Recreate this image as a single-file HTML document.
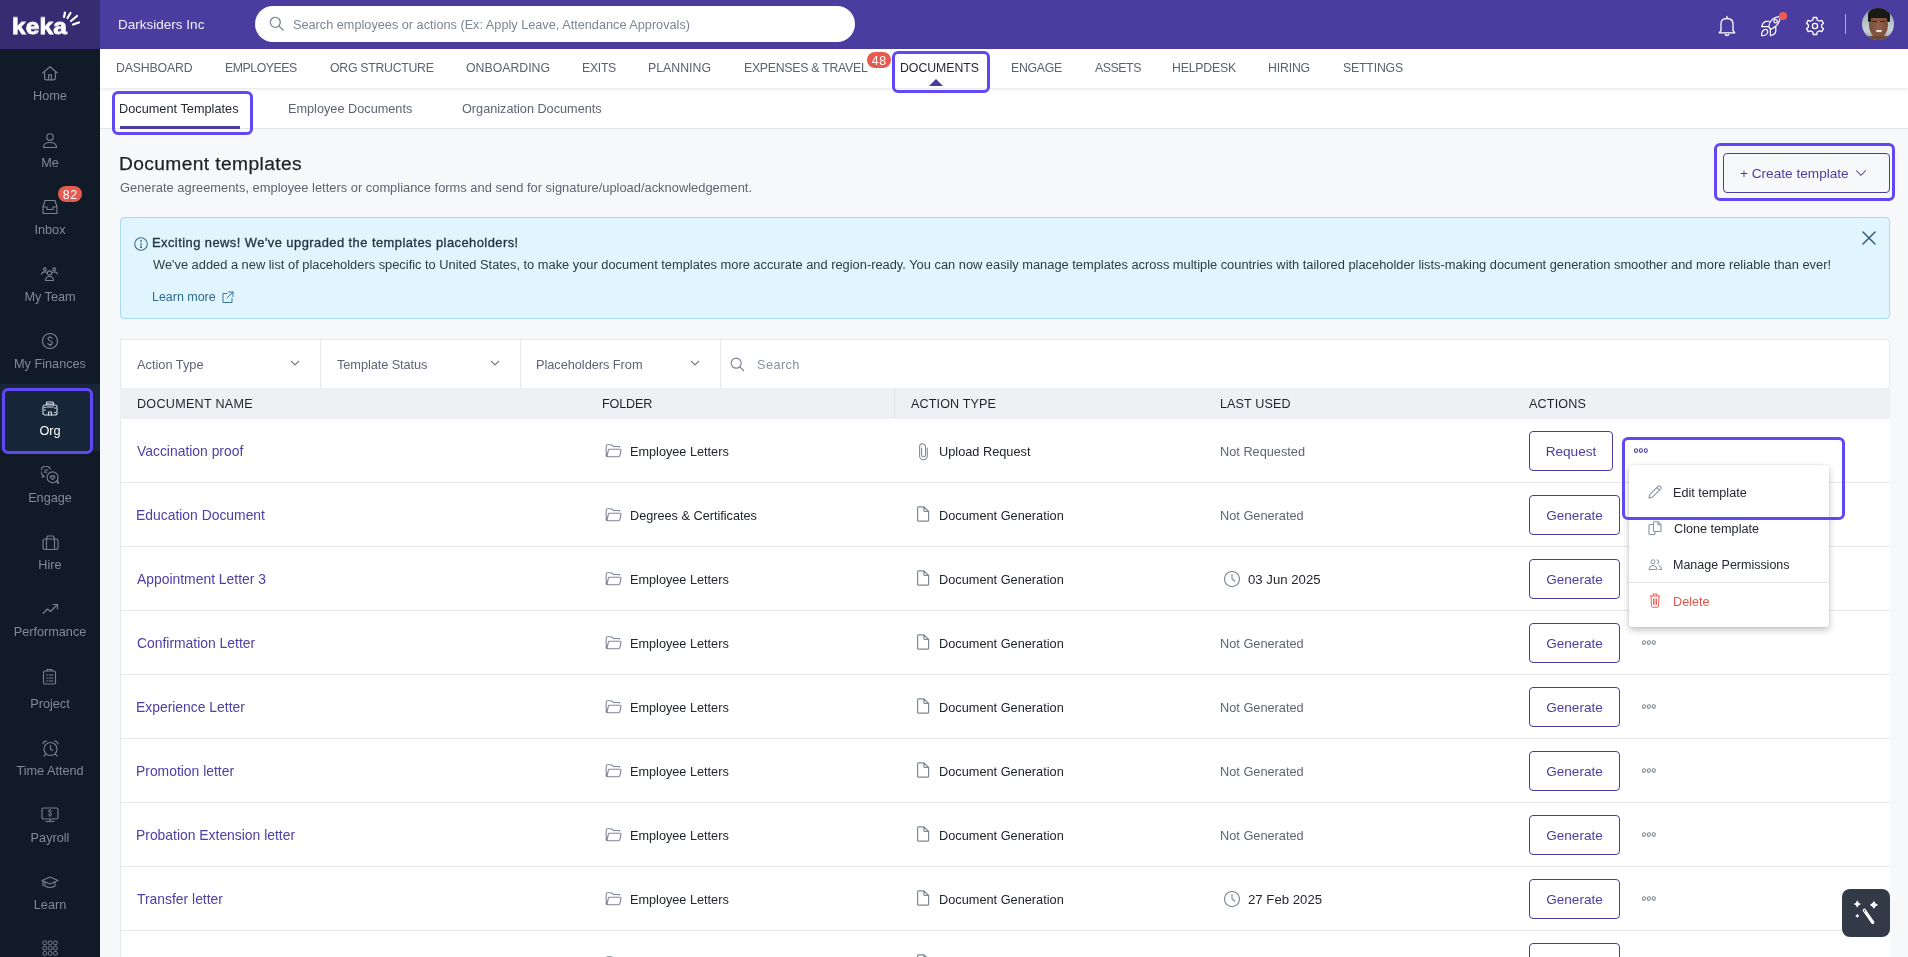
<!DOCTYPE html>
<html><head><meta charset="utf-8"><style>
html,body{margin:0;padding:0;}
body{width:1908px;height:957px;overflow:hidden;position:relative;background:#f7f8fa;font-family:"Liberation Sans", sans-serif;}
.t{position:absolute;white-space:nowrap;line-height:1;will-change:transform;}
svg{display:block}
</style></head><body>
<div style="position:absolute;left:100px;top:0px;width:1808px;height:49px;background:#4b3da0"></div>
<div style="position:absolute;left:100px;top:49px;width:1808px;height:39px;background:#fff;box-shadow:0 1px 4px rgba(30,40,60,.13);z-index:2"></div>
<div style="position:absolute;left:100px;top:88px;width:1808px;height:40px;background:#fff;border-bottom:1px solid #e3e5ea;box-sizing:border-box;height:41px"></div>
<div style="position:absolute;left:0px;top:0px;width:100px;height:957px;background:#111b27"></div>
<div style="position:absolute;left:0px;top:0px;width:100px;height:49px;background:#372c72"></div>
<div class="t" style="left:11.8px;top:14.46px;font-size:24.5px;color:#fff;font-weight:700;letter-spacing:0.1px;-webkit-text-stroke:0.9px #fff;transform:scaleY(0.92);transform-origin:0 86%;">keka</div>
<svg style="position:absolute;left:60px;top:10px;" width="22" height="18" viewBox="0 0 22 18" fill="none"><g stroke="#fff" stroke-width="2.2" stroke-linecap="round"><line x1="4" y1="7" x2="5" y2="2.5"></line><line x1="7.5" y1="8" x2="10.5" y2="3"></line><line x1="11" y1="11" x2="17" y2="6"></line><line x1="13" y1="14.5" x2="19" y2="12.5"></line></g></svg>
<div style="position:absolute;left:0px;top:384px;width:100px;height:67px;background:#172639"></div>
<div style="position:absolute;left:2px;top:388px;width:91px;height:66px;border:3px solid #6148f5;border-radius:6px;box-sizing:border-box"></div>
<svg style="position:absolute;left:42px;top:66px;" width="16" height="16" viewBox="0 0 16 16" fill="none"><g stroke="#76818f" stroke-width="1.15" stroke-linecap="round" stroke-linejoin="round"><path d="M0.8 6.8 L8 0.8 L15.2 6.8 M2.6 5.4 V11.8 Q2.6 13.8 4.6 13.8 H11.4 Q13.4 13.8 13.4 11.8 V5.4 M6.6 13.8 V8.8 H9.4 V13.8"></path></g></svg>
<div class="t" style="left:0;width:100px;text-align:center;top:90.25px;font-size:12.7px;color:#7f8a99">Home</div>
<svg style="position:absolute;left:42px;top:132px;" width="16" height="16" viewBox="0 0 16 16" fill="none"><g stroke="#76818f" stroke-width="1.15" stroke-linecap="round" stroke-linejoin="round"><circle cx="8" cy="5" r="3.3"></circle><path d="M1.5 15.5 Q1.5 10.5 8 10.5 Q14.5 10.5 14.5 15.5 Z"></path></g></svg>
<div class="t" style="left:0;width:100px;text-align:center;top:157.25px;font-size:12.7px;color:#7f8a99">Me</div>
<svg style="position:absolute;left:42px;top:199px;" width="16" height="16" viewBox="0 0 16 16" fill="none"><g stroke="#76818f" stroke-width="1.15" stroke-linecap="round" stroke-linejoin="round"><path d="M3 1.5 H13 L15 8 V14.5 H1 V8 Z M1 8 H5 V10.5 H11 V8 H15"></path></g></svg>
<div class="t" style="left:0;width:100px;text-align:center;top:224.25px;font-size:12.7px;color:#7f8a99">Inbox</div>
<svg style="position:absolute;left:41px;top:267px;" width="17" height="14" viewBox="0 0 17 14" fill="none"><g stroke="#76818f" stroke-width="1.15" stroke-linecap="round" stroke-linejoin="round"><circle cx="8.5" cy="6" r="2.2"></circle><path d="M4.5 13.5 Q4.5 9.5 8.5 9.5 Q12.5 9.5 12.5 13.5 Z"></path><circle cx="3.8" cy="2.3" r="1.4"></circle><circle cx="13.2" cy="2.3" r="1.4"></circle><path d="M0.5 7 Q1.2 4.8 3.8 4.8 Q5 4.8 5.8 5.4 M16.5 7 Q15.8 4.8 13.2 4.8 Q12 4.8 11.2 5.4"></path></g></svg>
<div class="t" style="left:0;width:100px;text-align:center;top:291.25px;font-size:12.7px;color:#7f8a99">My Team</div>
<svg style="position:absolute;left:42px;top:333px;" width="16" height="16" viewBox="0 0 16 16" fill="none"><g stroke="#76818f" stroke-width="1.15" stroke-linecap="round" stroke-linejoin="round"><circle cx="8" cy="8" r="7.5"></circle><path d="M10 5.2 Q9.5 4.2 8 4.2 Q6 4.2 6 5.8 Q6 7.3 8 7.7 Q10.2 8.2 10.2 9.9 Q10.2 11.6 8 11.6 Q6.3 11.6 5.8 10.5 M8 3 V4.2 M8 11.6 V13"></path></g></svg>
<div class="t" style="left:0;width:100px;text-align:center;top:358.25px;font-size:12.7px;color:#7f8a99">My Finances</div>
<svg style="position:absolute;left:42px;top:401px;" width="16" height="15" viewBox="0 0 16 15" fill="none"><g stroke="#d5d9df" stroke-width="1.15" stroke-linecap="round" stroke-linejoin="round"><rect x="1" y="4" width="14" height="10" rx="2"></rect><path d="M4.5 4 V2 Q4.5 1 5.5 1 H10.5 Q11.5 1 11.5 2 V4 M5.5 3 H10.5 M5 6 H11 M6.5 14 V11 H9.5 V14 M2.5 6.5 H3.5 M2.5 9 H3.5 M12.5 7 H13.5 M12.5 11.5 H13.5"></path></g></svg>
<div class="t" style="left:0;width:100px;text-align:center;top:425.25px;font-size:12.7px;color:#ffffff">Org</div>
<svg style="position:absolute;left:41px;top:466px;" width="18" height="18" viewBox="0 0 18 18" fill="none"><g stroke="#76818f" stroke-width="1.15" stroke-linecap="round" stroke-linejoin="round"><path d="M9.3 2.9 A5 5 0 1 0 2.3 9.4 L1.1 11.2 L3.6 10.3"></path><path d="M3.4 4 H6.8 M3.4 6.1 H5.8"></path><circle cx="11.6" cy="11.3" r="5.5"></circle><path d="M15.3 15.3 L17.5 17.6 L16.7 14.2"></path><path d="M11.6 13.6 L9.7 11.7 Q9 10.4 10.3 9.9 Q11.1 9.7 11.6 10.5 Q12.1 9.7 12.9 9.9 Q14.2 10.4 13.5 11.7 Z"></path></g></svg>
<div class="t" style="left:0;width:100px;text-align:center;top:492.25px;font-size:12.7px;color:#7f8a99">Engage</div>
<svg style="position:absolute;left:41.5px;top:535px;" width="17" height="15" viewBox="0 0 17 15" fill="none"><g stroke="#76818f" stroke-width="1.15" stroke-linecap="round" stroke-linejoin="round"><rect x="1" y="4" width="15" height="10.5" rx="2"></rect><path d="M5 4 V2 Q5 1 6 1 H11 Q12 1 12 2 V4 M4.5 4 V14.5 M12.5 4 V14.5"></path></g></svg>
<div class="t" style="left:0;width:100px;text-align:center;top:559.25px;font-size:12.7px;color:#7f8a99">Hire</div>
<svg style="position:absolute;left:42px;top:603px;" width="17" height="12" viewBox="0 0 17 12" fill="none"><g stroke="#76818f" stroke-width="1.15" stroke-linecap="round" stroke-linejoin="round"><path d="M1 10.5 L5.5 6 L8.5 8.5 L15.5 1.5 M11 1.5 H15.5 V6"></path></g></svg>
<div class="t" style="left:0;width:100px;text-align:center;top:626.25px;font-size:12.7px;color:#7f8a99">Performance</div>
<svg style="position:absolute;left:42px;top:668px;" width="15" height="17" viewBox="0 0 15 17" fill="none"><g stroke="#76818f" stroke-width="1.15" stroke-linecap="round" stroke-linejoin="round"><rect x="1.5" y="3" width="12" height="13" rx="1.5"></rect><path d="M5 3 V1.5 H10 V3 M4.5 7 H5.5 M7 7 H11 M4.5 10 H5.5 M7 10 H11 M4.5 13 H5.5 M7 13 H11"></path></g></svg>
<div class="t" style="left:0;width:100px;text-align:center;top:698.25px;font-size:12.7px;color:#7f8a99">Project</div>
<svg style="position:absolute;left:41.5px;top:740px;" width="17" height="17" viewBox="0 0 17 17" fill="none"><g stroke="#76818f" stroke-width="1.15" stroke-linecap="round" stroke-linejoin="round"><circle cx="8.5" cy="9" r="6.5"></circle><path d="M8.5 5.5 V9 L10.5 10.5 M1 4 Q1.5 1 4.5 1 M16 4 Q15.5 1 12.5 1 M3.5 14.5 L2 16 M13.5 14.5 L15 16"></path></g></svg>
<div class="t" style="left:0;width:100px;text-align:center;top:765.25px;font-size:12.7px;color:#7f8a99">Time Attend</div>
<svg style="position:absolute;left:41px;top:807px;" width="18" height="16" viewBox="0 0 18 16" fill="none"><g stroke="#76818f" stroke-width="1.15" stroke-linecap="round" stroke-linejoin="round"><rect x="1" y="1" width="16" height="11" rx="1.5"></rect><path d="M9 12 V14 M5 14.5 H13 M10.2 4.2 Q9.8 3.5 9 3.5 Q7.8 3.5 7.8 4.6 Q7.8 5.5 9 5.8 Q10.3 6.1 10.3 7.2 Q10.3 8.4 9 8.4 Q8 8.4 7.6 7.6 M9 2.5 V3.5 M9 8.4 V9.5"></path></g></svg>
<div class="t" style="left:0;width:100px;text-align:center;top:832.25px;font-size:12.7px;color:#7f8a99">Payroll</div>
<svg style="position:absolute;left:41px;top:876px;" width="18" height="13" viewBox="0 0 18 13" fill="none"><g stroke="#76818f" stroke-width="1.15" stroke-linecap="round" stroke-linejoin="round"><path d="M9 1 L17 4.5 L9 8 L1 4.5 Z M4 6 V10 Q9 13 14 10 V6 M2 5 V10"></path></g></svg>
<div class="t" style="left:0;width:100px;text-align:center;top:899.25px;font-size:12.7px;color:#7f8a99">Learn</div>
<div class="t" style="left:58px;top:186px;width:24px;height:16px;line-height:19.3px;border-radius:8px;background:#e55b4f;color:#fff;font-size:12.4px;letter-spacing:0.7px;text-indent:0.7px;text-align:center">82</div>
<svg style="position:absolute;left:42px;top:940px;" width="17" height="17" viewBox="0 0 17 17" fill="none"><g stroke="#76818f" stroke-width="1"><rect x="1.0" y="1.0" width="3.6" height="3.6" rx="1"></rect><rect x="1.0" y="6.3" width="3.6" height="3.6" rx="1"></rect><rect x="1.0" y="11.6" width="3.6" height="3.6" rx="1"></rect><rect x="6.3" y="1.0" width="3.6" height="3.6" rx="1"></rect><rect x="6.3" y="6.3" width="3.6" height="3.6" rx="1"></rect><rect x="6.3" y="11.6" width="3.6" height="3.6" rx="1"></rect><rect x="11.6" y="1.0" width="3.6" height="3.6" rx="1"></rect><rect x="11.6" y="6.3" width="3.6" height="3.6" rx="1"></rect><rect x="11.6" y="11.6" width="3.6" height="3.6" rx="1"></rect></g></svg>
<div class="t" style="left: 117.5px; top: 17.77px; font-size: 13.5px; color: rgb(241, 239, 250); font-weight: 400; letter-spacing: 0.008px;">Darksiders Inc</div>
<div style="position:absolute;left:255px;top:6px;width:600px;height:36px;background:#fff;border-radius:18px"></div>
<svg style="position:absolute;left:269px;top:16px;" width="15" height="15" viewBox="0 0 15 15" fill="none"><g stroke="#7b8391" stroke-width="1.3" stroke-linecap="round"><circle cx="6.3" cy="6.3" r="5"></circle><line x1="10" y1="10" x2="14" y2="14"></line></g></svg>
<div class="t" style="left: 292.5px; top: 19.25px; font-size: 12.7px; color: rgb(125, 133, 146); font-weight: 400; letter-spacing: 0.01px;">Search employees or actions (Ex: Apply Leave, Attendance Approvals)</div>
<svg style="position:absolute;left:1718px;top:15px;" width="18" height="22" viewBox="0 0 18 22" fill="none"><g stroke="#fff" stroke-width="1.3" stroke-linecap="round" stroke-linejoin="round"><path d="M3 15.5 V9 Q3 3.5 9 3.5 Q15 3.5 15 9 V15.5 L16.8 17.8 H1.2 Z M9 1.5 V3.5 M7.3 19.5 Q9 21.5 10.7 19.5"></path></g></svg>
<svg style="position:absolute;left:1760px;top:15px;" width="22" height="22" viewBox="0 0 22 22" fill="none"><g stroke="#fff" stroke-width="1.2" stroke-linejoin="round" stroke-linecap="round"><path d="M8.8 11.5 Q9.5 3 20.4 1.4 Q19.8 10.5 11 14.3 Q9.5 13.5 8.8 11.5 Z"></path><circle cx="15.6" cy="6.3" r="1.7"></circle><path d="M9 6.4 H5.4 Q2.6 7.8 1.6 11.7 H8.6"></path><path d="M15.8 12.2 V16.3 Q15.3 19.5 10.4 20.6 V14.3"></path><path d="M1.6 20.6 Q1.4 14.8 5.6 14.3 Q8.4 14.6 7.6 17.6 Q6.4 20.7 1.6 20.6 Z"></path></g></svg>
<div style="position:absolute;left:1779px;top:12px;width:8px;height:8px;border-radius:50%;background:#ee5d4f"></div>
<svg style="position:absolute;left:1805px;top:16px;" width="20" height="20" viewBox="0 0 20 20" fill="none"><g stroke="#fff" stroke-width="1.3" stroke-linejoin="round"><path d="M8.3 1.5 H11.7 L12.2 4 L14.4 5.2 L16.8 4.4 L18.5 7.3 L16.6 9 V11 L18.5 12.7 L16.8 15.6 L14.4 14.8 L12.2 16 L11.7 18.5 H8.3 L7.8 16 L5.6 14.8 L3.2 15.6 L1.5 12.7 L3.4 11 V9 L1.5 7.3 L3.2 4.4 L5.6 5.2 L7.8 4 Z"></path><circle cx="10" cy="10" r="2.6"></circle></g></svg>
<div style="position:absolute;left:1845px;top:14px;width:1px;height:20px;background:rgba(255,255,255,.55)"></div>
<div style="position:absolute;left:1862px;top:8px;width:32px;height:32px;border-radius:50%;overflow:hidden;background:linear-gradient(180deg,#8f9ea6 0,#b8c3c8 45%,#c9d2d6 70%,#8d9aa2 100%)"><div style="position:absolute;inset:0;filter:blur(0.45px)">
<div style="position:absolute;left:7px;top:4px;width:19px;height:26px;border-radius:46% 46% 50% 50%;background:radial-gradient(ellipse at 50% 55%,#93604a 0,#7e5140 55%,#6a4436 100%)"></div>
<div style="position:absolute;left:5.5px;top:0px;width:22px;height:9.5px;border-radius:11px 11px 4px 4px;background:#1c1816"></div>
<div style="position:absolute;left:5.5px;top:5px;width:3px;height:9px;border-radius:2px;background:#1c1816"></div>
<div style="position:absolute;left:24.5px;top:5px;width:3px;height:9px;border-radius:2px;background:#1c1816"></div>
<div style="position:absolute;left:10px;top:12.5px;width:5px;height:1.6px;border-radius:1px;background:#3a2620"></div>
<div style="position:absolute;left:18px;top:12.5px;width:5px;height:1.6px;border-radius:1px;background:#3a2620"></div>
<div style="position:absolute;left:13.5px;top:21.5px;width:6.5px;height:2.6px;border-radius:1px 1px 4px 4px;background:#e9e1dc"></div>
<div style="position:absolute;left:2px;top:28px;width:28px;height:6px;border-radius:8px 8px 0 0;background:#6b4a33"></div>
</div></div>
<div class="t" style="left: 115.6px; top: 61.99px; font-size: 12.3px; color: rgb(90, 98, 112); z-index: 3; letter-spacing: -0.167px;">DASHBOARD</div>
<div class="t" style="left: 225px; top: 61.99px; font-size: 12.3px; color: rgb(90, 98, 112); z-index: 3; letter-spacing: -0.462px;">EMPLOYEES</div>
<div class="t" style="left: 330px; top: 61.99px; font-size: 12.3px; color: rgb(90, 98, 112); z-index: 3; letter-spacing: -0.282px;">ORG STRUCTURE</div>
<div class="t" style="left: 466px; top: 61.99px; font-size: 12.3px; color: rgb(90, 98, 112); z-index: 3; letter-spacing: -0.005px;">ONBOARDING</div>
<div class="t" style="left: 582px; top: 61.99px; font-size: 12.3px; color: rgb(90, 98, 112); z-index: 3; letter-spacing: -0.309px;">EXITS</div>
<div class="t" style="left: 648px; top: 61.99px; font-size: 12.3px; color: rgb(90, 98, 112); z-index: 3; letter-spacing: 0.016px;">PLANNING</div>
<div class="t" style="left: 743.9px; top: 61.99px; font-size: 12.3px; color: rgb(90, 98, 112); z-index: 3; letter-spacing: -0.267px;">EXPENSES &amp; TRAVEL</div>
<div class="t" style="left: 900.2px; top: 61.99px; font-size: 12.3px; color: rgb(31, 35, 43); z-index: 3; letter-spacing: -0.028px;">DOCUMENTS</div>
<div class="t" style="left: 1011px; top: 61.99px; font-size: 12.3px; color: rgb(90, 98, 112); z-index: 3; letter-spacing: -0.271px;">ENGAGE</div>
<div class="t" style="left: 1095px; top: 61.99px; font-size: 12.3px; color: rgb(90, 98, 112); z-index: 3; letter-spacing: -0.422px;">ASSETS</div>
<div class="t" style="left: 1172px; top: 61.99px; font-size: 12.3px; color: rgb(90, 98, 112); z-index: 3; letter-spacing: -0.201px;">HELPDESK</div>
<div class="t" style="left: 1268px; top: 61.99px; font-size: 12.3px; color: rgb(90, 98, 112); z-index: 3; letter-spacing: -0.174px;">HIRING</div>
<div class="t" style="left: 1343px; top: 61.99px; font-size: 12.3px; color: rgb(90, 98, 112); z-index: 3; letter-spacing: -0.188px;">SETTINGS</div>
<div class="t" style="left:867px;top:52px;width:24px;height:16px;line-height:19.3px;border-radius:8px;background:#e55b4f;color:#fff;font-size:12.4px;letter-spacing:0.7px;text-indent:0.7px;text-align:center;z-index:3">48</div>
<div style="position:absolute;left:892px;top:51px;width:98px;height:42px;border:3px solid #6148f5;border-radius:6px;box-sizing:border-box;z-index:4"></div>
<svg style="position:absolute;left:929px;top:79px;z-index:4" width="14" height="7" viewBox="0 0 14 7" fill="none"><path d="M7 0 L14 7 H0 Z" fill="#4b3da0"></path></svg>
<div class="t" style="left: 119.4px; top: 102.95px; font-size: 12.7px; color: rgb(35, 39, 46); font-weight: 400; letter-spacing: 0.036px;">Document Templates</div>
<div style="position:absolute;left:120px;top:126px;width:120px;height:2.5px;background:#4b3da0"></div>
<div style="position:absolute;left:112px;top:91px;width:141px;height:44px;border:3px solid #6148f5;border-radius:6px;box-sizing:border-box"></div>
<div class="t" style="left: 287.7px; top: 102.95px; font-size: 12.7px; color: rgb(93, 100, 113); font-weight: 400; letter-spacing: 0.01px;">Employee Documents</div>
<div class="t" style="left:461.5px;top:102.95px;font-size:12.7px;color:#5d6471;font-weight:400;">Organization Documents</div>
<div class="t" style="left: 119.3px; top: 153.65px; font-size: 19.2px; color: rgb(29, 33, 39); font-weight: 400; -webkit-text-stroke: 0.25px rgb(29, 33, 39); letter-spacing: 0.391px;">Document templates</div>
<div class="t" style="left: 120.3px; top: 181.88px; font-size: 12.9px; color: rgb(93, 100, 113); font-weight: 400; letter-spacing: 0px;">Generate agreements, employee letters or compliance forms and send for signature/upload/acknowledgement.</div>
<div style="position:absolute;left:1723px;top:153px;width:167px;height:40px;border:1px solid #4b3da0;border-radius:4px;box-sizing:border-box;background:#f7f8fa"></div>
<div class="t" style="left: 1739.7px; top: 166.89px; font-size: 13.6px; color: rgb(75, 61, 160); font-weight: 400; letter-spacing: 0.015px;">+ Create template</div>
<svg style="position:absolute;left:1855px;top:169px;" width="12" height="8" viewBox="0 0 12 8" fill="none"><path d="M1.2 1.5 L6 6.3 L10.8 1.5" stroke="#4b3da0" stroke-width="1.05" fill="none"></path></svg>
<div style="position:absolute;left:1714px;top:143px;width:181px;height:58px;border:3px solid #6148f5;border-radius:6px;box-sizing:border-box"></div>
<div style="position:absolute;left:120px;top:217px;width:1770px;height:102px;background:#e0f5fd;border:1px solid #a9d9ec;border-radius:4px;box-sizing:border-box"></div>
<svg style="position:absolute;left:134px;top:237px;" width="14" height="14" viewBox="0 0 14 14" fill="none"><g stroke="#3c6c8b" stroke-width="1.1"><circle cx="7" cy="7" r="6.3"></circle><path d="M7 6 V10.5 M6 10.5 H8"></path></g><circle cx="7" cy="4" r="0.9" fill="#3c6c8b"></circle></svg>
<div class="t" style="left: 152.4px; top: 236.88px; font-size: 12.9px; color: rgb(31, 52, 65); font-weight: 400; -webkit-text-stroke: 0.35px rgb(31, 52, 65); letter-spacing: 0.459px;">Exciting news! We've upgraded the templates placeholders!</div>
<div class="t" style="left: 153.4px; top: 258.92px; font-size: 12.85px; color: rgb(44, 59, 70); font-weight: 400; letter-spacing: -0.001px;">We've added a new list of placeholders specific to United States, to make your document templates more accurate and region-ready. You can now easily manage templates across multiple countries with tailored placeholder lists-making document generation smoother and more reliable than ever!</div>
<div class="t" style="left: 152.4px; top: 290.72px; font-size: 12.5px; color: rgb(47, 106, 142); font-weight: 400; letter-spacing: -0.024px;">Learn more</div>
<svg style="position:absolute;left:221px;top:291px;" width="13" height="13" viewBox="0 0 13 13" fill="none"><g stroke="#2f6a8e" stroke-width="0.95" stroke-linecap="round"><path d="M6 2.5 H2 V11.5 H11 V7.5 M7.5 1 H12 V5.5 M12 1 L6 7"></path></g></svg>
<svg style="position:absolute;left:1862px;top:231px;" width="14" height="14" viewBox="0 0 14 14" fill="none"><g stroke="#2c5a73" stroke-width="1.4" stroke-linecap="round"><line x1="1" y1="1" x2="13" y2="13"></line><line x1="13" y1="1" x2="1" y2="13"></line></g></svg>
<div style="position:absolute;left:120px;top:339px;width:1770px;height:50px;background:#fff;border:1px solid #e5e7eb;border-radius:0 4px 4px 0;box-sizing:border-box"></div>
<div class="t" style="left: 137.4px; top: 359.16px; font-size: 12.8px; color: rgb(93, 101, 115); font-weight: 400; letter-spacing: -0.004px;">Action Type</div>
<svg style="position:absolute;left:290px;top:360px;" width="10" height="6" viewBox="0 0 10 6" fill="none"><path d="M1 1 L5 5 L9 1" stroke="#737b88" stroke-width="1.1" fill="none"></path></svg>
<div style="position:absolute;left:320px;top:340px;width:1px;height:48px;background:#e5e7eb"></div>
<div class="t" style="left: 337.4px; top: 359.16px; font-size: 12.8px; color: rgb(93, 101, 115); font-weight: 400; letter-spacing: -0.091px;">Template Status</div>
<svg style="position:absolute;left:490px;top:360px;" width="10" height="6" viewBox="0 0 10 6" fill="none"><path d="M1 1 L5 5 L9 1" stroke="#737b88" stroke-width="1.1" fill="none"></path></svg>
<div style="position:absolute;left:520px;top:340px;width:1px;height:48px;background:#e5e7eb"></div>
<div class="t" style="left: 536.4px; top: 359.16px; font-size: 12.8px; color: rgb(93, 101, 115); font-weight: 400; letter-spacing: -0.053px;">Placeholders From</div>
<svg style="position:absolute;left:690px;top:360px;" width="10" height="6" viewBox="0 0 10 6" fill="none"><path d="M1 1 L5 5 L9 1" stroke="#737b88" stroke-width="1.1" fill="none"></path></svg>
<div style="position:absolute;left:720px;top:340px;width:1px;height:48px;background:#e5e7eb"></div>
<svg style="position:absolute;left:730px;top:357px;" width="15" height="15" viewBox="0 0 15 15" fill="none"><g stroke="#7b8391" stroke-width="1.2" stroke-linecap="round"><circle cx="6.2" cy="6.2" r="5"></circle><line x1="9.8" y1="9.8" x2="13.5" y2="13.5"></line></g></svg>
<div class="t" style="left: 757px; top: 359.16px; font-size: 12.8px; color: rgb(138, 145, 156); font-weight: 400; letter-spacing: 0.376px;">Search</div>
<div style="position:absolute;left:120px;top:388px;width:1770px;height:569px;background:#fff;border-left:1px solid #e5e7eb;box-sizing:border-box"></div>
<div style="position:absolute;left:120px;top:388px;width:1770px;height:31px;background:#eff0f4"></div>
<div style="position:absolute;left:894px;top:388px;width:1px;height:31px;background:#e2e4e9"></div>
<div class="t" style="left: 137.4px; top: 398.13px; font-size: 12.6px; color: rgb(31, 35, 40); font-weight: 400; letter-spacing: 0.275px;">DOCUMENT NAME</div>
<div class="t" style="left: 601.9px; top: 398.13px; font-size: 12.6px; color: rgb(31, 35, 40); font-weight: 400; letter-spacing: -0.132px;">FOLDER</div>
<div class="t" style="left: 910.9px; top: 398.13px; font-size: 12.6px; color: rgb(31, 35, 40); font-weight: 400; letter-spacing: 0.123px;">ACTION TYPE</div>
<div class="t" style="left: 1220px; top: 398.13px; font-size: 12.6px; color: rgb(31, 35, 40); font-weight: 400; letter-spacing: 0.093px;">LAST USED</div>
<div class="t" style="left: 1529.3px; top: 398.13px; font-size: 12.6px; color: rgb(31, 35, 40); font-weight: 400; letter-spacing: 0.159px;">ACTIONS</div>
<div class="t" style="left:137.4px;top:445.43px;font-size:13.9px;color:#4d40a6;font-weight:400;">Vaccination proof</div>
<svg style="position:absolute;left:605px;top:444px;" width="17" height="14" viewBox="0 0 17 14" fill="none"><g stroke="#7c8696" stroke-width="1.1" stroke-linejoin="round"><path d="M1.2 12 V2.2 Q1.2 0.8 2.6 0.8 H6 Q7 0.8 7.6 1.6 L8.2 2.5 H13.6 Q14.6 2.5 15 3.5 M2 12.2 L3.4 6.2 Q3.7 5.3 4.6 5.3 H15.2 Q16.2 5.3 16 6.3 L14.8 11.7 Q14.6 12.7 13.6 12.7 H2.6 Q1.2 12.7 1.2 11.4"></path></g></svg>
<div class="t" style="left:629.5px;top:446.45px;font-size:12.7px;color:#20242b;font-weight:400;">Employee Letters</div>
<svg style="position:absolute;left:918.5px;top:442.5px;" width="10" height="18" viewBox="0 0 10 18" fill="none"><g stroke="#7c8696" stroke-width="1.05" stroke-linecap="round"><path d="M2.6 5 V11.9 A1.95 1.95 0 0 0 6.5 11.9 V3.6 A2.95 2.95 0 0 0 0.6 3.6 V12.9 A3.85 3.85 0 0 0 8.3 12.9 V5"></path></g></svg>
<div class="t" style="left:938.5px;top:446.41px;font-size:12.75px;color:#20242b;font-weight:400;">Upload Request</div>
<div class="t" style="left:1220px;top:446.41px;font-size:12.75px;color:#5f6672;font-weight:400;">Not Requested</div>
<div style="position:absolute;left:1529px;top:431px;width:84px;height:40px;border:1px solid #4b3da0;border-radius:4px;box-sizing:border-box;background:#fff"></div>
<div class="t" style="left:1529px;width:84px;text-align:center;top:444.89px;font-size:13.6px;color:#4b3da0">Request</div>
<svg style="position:absolute;left:1634.4px;top:447.5px;" width="15" height="5" viewBox="0 0 15 5" fill="none"><g stroke="#4b3da0" stroke-width="1.05"><ellipse cx="2.00" cy="2.5" rx="1.55" ry="1.85"></ellipse><ellipse cx="6.90" cy="2.5" rx="1.55" ry="1.85"></ellipse><ellipse cx="11.80" cy="2.5" rx="1.55" ry="1.85"></ellipse></g></svg>
<div style="position:absolute;left:120px;top:482px;width:1770px;height:1px;background:#e6e8ec"></div>
<div class="t" style="left:136.4px;top:509.43px;font-size:13.9px;color:#4d40a6;font-weight:400;">Education Document</div>
<svg style="position:absolute;left:605px;top:508px;" width="17" height="14" viewBox="0 0 17 14" fill="none"><g stroke="#7c8696" stroke-width="1.1" stroke-linejoin="round"><path d="M1.2 12 V2.2 Q1.2 0.8 2.6 0.8 H6 Q7 0.8 7.6 1.6 L8.2 2.5 H13.6 Q14.6 2.5 15 3.5 M2 12.2 L3.4 6.2 Q3.7 5.3 4.6 5.3 H15.2 Q16.2 5.3 16 6.3 L14.8 11.7 Q14.6 12.7 13.6 12.7 H2.6 Q1.2 12.7 1.2 11.4"></path></g></svg>
<div class="t" style="left:629.5px;top:510.45px;font-size:12.7px;color:#20242b;font-weight:400;">Degrees &amp; Certificates</div>
<svg style="position:absolute;left:915.5px;top:506px;" width="14" height="16" viewBox="0 0 14 16" fill="none"><g stroke="#7c8696" stroke-width="1.2" stroke-linejoin="round"><path d="M2.6 0.8 H8 L12.6 5.4 V14.2 Q12.6 15.2 11.6 15.2 H2.6 Q1.6 15.2 1.6 14.2 V1.8 Q1.6 0.8 2.6 0.8 Z M8 0.8 V4.4 Q8 5.4 9 5.4 H12.6"></path></g></svg>
<div class="t" style="left:938.5px;top:510.41px;font-size:12.75px;color:#20242b;font-weight:400;">Document Generation</div>
<div class="t" style="left:1220px;top:510.41px;font-size:12.75px;color:#5f6672;font-weight:400;">Not Generated</div>
<div style="position:absolute;left:1529px;top:495px;width:91px;height:40px;border:1px solid #4b3da0;border-radius:4px;box-sizing:border-box;background:#fff"></div>
<div class="t" style="left:1529px;width:91px;text-align:center;top:508.89px;font-size:13.6px;color:#4b3da0">Generate</div>
<svg style="position:absolute;left:1641.5px;top:511.5px;" width="15" height="5" viewBox="0 0 15 5" fill="none"><g stroke="#7c8696" stroke-width="1.05"><ellipse cx="2.00" cy="2.5" rx="1.55" ry="1.85"></ellipse><ellipse cx="6.90" cy="2.5" rx="1.55" ry="1.85"></ellipse><ellipse cx="11.80" cy="2.5" rx="1.55" ry="1.85"></ellipse></g></svg>
<div style="position:absolute;left:120px;top:546px;width:1770px;height:1px;background:#e6e8ec"></div>
<div class="t" style="left:137.4px;top:573.43px;font-size:13.9px;color:#4d40a6;font-weight:400;">Appointment Letter 3</div>
<svg style="position:absolute;left:605px;top:572px;" width="17" height="14" viewBox="0 0 17 14" fill="none"><g stroke="#7c8696" stroke-width="1.1" stroke-linejoin="round"><path d="M1.2 12 V2.2 Q1.2 0.8 2.6 0.8 H6 Q7 0.8 7.6 1.6 L8.2 2.5 H13.6 Q14.6 2.5 15 3.5 M2 12.2 L3.4 6.2 Q3.7 5.3 4.6 5.3 H15.2 Q16.2 5.3 16 6.3 L14.8 11.7 Q14.6 12.7 13.6 12.7 H2.6 Q1.2 12.7 1.2 11.4"></path></g></svg>
<div class="t" style="left:629.5px;top:574.45px;font-size:12.7px;color:#20242b;font-weight:400;">Employee Letters</div>
<svg style="position:absolute;left:915.5px;top:570px;" width="14" height="16" viewBox="0 0 14 16" fill="none"><g stroke="#7c8696" stroke-width="1.2" stroke-linejoin="round"><path d="M2.6 0.8 H8 L12.6 5.4 V14.2 Q12.6 15.2 11.6 15.2 H2.6 Q1.6 15.2 1.6 14.2 V1.8 Q1.6 0.8 2.6 0.8 Z M8 0.8 V4.4 Q8 5.4 9 5.4 H12.6"></path></g></svg>
<div class="t" style="left:938.5px;top:574.41px;font-size:12.75px;color:#20242b;font-weight:400;">Document Generation</div>
<svg style="position:absolute;left:1224px;top:571px;" width="16" height="16" viewBox="0 0 16 16" fill="none"><g stroke="#7c8696" stroke-width="1.1" stroke-linecap="round"><circle cx="8" cy="8" r="7.5"></circle><path d="M8 3.5 V8 L10.8 10.2"></path></g></svg>
<div class="t" style="left:1248.2px;top:573.23px;font-size:13.2px;color:#1f232b;font-weight:400;">03 Jun 2025</div>
<div style="position:absolute;left:1529px;top:559px;width:91px;height:40px;border:1px solid #4b3da0;border-radius:4px;box-sizing:border-box;background:#fff"></div>
<div class="t" style="left:1529px;width:91px;text-align:center;top:572.89px;font-size:13.6px;color:#4b3da0">Generate</div>
<svg style="position:absolute;left:1641.5px;top:575.5px;" width="15" height="5" viewBox="0 0 15 5" fill="none"><g stroke="#7c8696" stroke-width="1.05"><ellipse cx="2.00" cy="2.5" rx="1.55" ry="1.85"></ellipse><ellipse cx="6.90" cy="2.5" rx="1.55" ry="1.85"></ellipse><ellipse cx="11.80" cy="2.5" rx="1.55" ry="1.85"></ellipse></g></svg>
<div style="position:absolute;left:120px;top:610px;width:1770px;height:1px;background:#e6e8ec"></div>
<div class="t" style="left:137.4px;top:637.43px;font-size:13.9px;color:#4d40a6;font-weight:400;">Confirmation Letter</div>
<svg style="position:absolute;left:605px;top:636px;" width="17" height="14" viewBox="0 0 17 14" fill="none"><g stroke="#7c8696" stroke-width="1.1" stroke-linejoin="round"><path d="M1.2 12 V2.2 Q1.2 0.8 2.6 0.8 H6 Q7 0.8 7.6 1.6 L8.2 2.5 H13.6 Q14.6 2.5 15 3.5 M2 12.2 L3.4 6.2 Q3.7 5.3 4.6 5.3 H15.2 Q16.2 5.3 16 6.3 L14.8 11.7 Q14.6 12.7 13.6 12.7 H2.6 Q1.2 12.7 1.2 11.4"></path></g></svg>
<div class="t" style="left:629.5px;top:638.45px;font-size:12.7px;color:#20242b;font-weight:400;">Employee Letters</div>
<svg style="position:absolute;left:915.5px;top:634px;" width="14" height="16" viewBox="0 0 14 16" fill="none"><g stroke="#7c8696" stroke-width="1.2" stroke-linejoin="round"><path d="M2.6 0.8 H8 L12.6 5.4 V14.2 Q12.6 15.2 11.6 15.2 H2.6 Q1.6 15.2 1.6 14.2 V1.8 Q1.6 0.8 2.6 0.8 Z M8 0.8 V4.4 Q8 5.4 9 5.4 H12.6"></path></g></svg>
<div class="t" style="left:938.5px;top:638.41px;font-size:12.75px;color:#20242b;font-weight:400;">Document Generation</div>
<div class="t" style="left:1220px;top:638.41px;font-size:12.75px;color:#5f6672;font-weight:400;">Not Generated</div>
<div style="position:absolute;left:1529px;top:623px;width:91px;height:40px;border:1px solid #4b3da0;border-radius:4px;box-sizing:border-box;background:#fff"></div>
<div class="t" style="left:1529px;width:91px;text-align:center;top:636.89px;font-size:13.6px;color:#4b3da0">Generate</div>
<svg style="position:absolute;left:1641.5px;top:639.5px;" width="15" height="5" viewBox="0 0 15 5" fill="none"><g stroke="#7c8696" stroke-width="1.05"><ellipse cx="2.00" cy="2.5" rx="1.55" ry="1.85"></ellipse><ellipse cx="6.90" cy="2.5" rx="1.55" ry="1.85"></ellipse><ellipse cx="11.80" cy="2.5" rx="1.55" ry="1.85"></ellipse></g></svg>
<div style="position:absolute;left:120px;top:674px;width:1770px;height:1px;background:#e6e8ec"></div>
<div class="t" style="left:136.4px;top:701.43px;font-size:13.9px;color:#4d40a6;font-weight:400;">Experience Letter</div>
<svg style="position:absolute;left:605px;top:700px;" width="17" height="14" viewBox="0 0 17 14" fill="none"><g stroke="#7c8696" stroke-width="1.1" stroke-linejoin="round"><path d="M1.2 12 V2.2 Q1.2 0.8 2.6 0.8 H6 Q7 0.8 7.6 1.6 L8.2 2.5 H13.6 Q14.6 2.5 15 3.5 M2 12.2 L3.4 6.2 Q3.7 5.3 4.6 5.3 H15.2 Q16.2 5.3 16 6.3 L14.8 11.7 Q14.6 12.7 13.6 12.7 H2.6 Q1.2 12.7 1.2 11.4"></path></g></svg>
<div class="t" style="left:629.5px;top:702.45px;font-size:12.7px;color:#20242b;font-weight:400;">Employee Letters</div>
<svg style="position:absolute;left:915.5px;top:698px;" width="14" height="16" viewBox="0 0 14 16" fill="none"><g stroke="#7c8696" stroke-width="1.2" stroke-linejoin="round"><path d="M2.6 0.8 H8 L12.6 5.4 V14.2 Q12.6 15.2 11.6 15.2 H2.6 Q1.6 15.2 1.6 14.2 V1.8 Q1.6 0.8 2.6 0.8 Z M8 0.8 V4.4 Q8 5.4 9 5.4 H12.6"></path></g></svg>
<div class="t" style="left:938.5px;top:702.41px;font-size:12.75px;color:#20242b;font-weight:400;">Document Generation</div>
<div class="t" style="left:1220px;top:702.41px;font-size:12.75px;color:#5f6672;font-weight:400;">Not Generated</div>
<div style="position:absolute;left:1529px;top:687px;width:91px;height:40px;border:1px solid #4b3da0;border-radius:4px;box-sizing:border-box;background:#fff"></div>
<div class="t" style="left:1529px;width:91px;text-align:center;top:700.89px;font-size:13.6px;color:#4b3da0">Generate</div>
<svg style="position:absolute;left:1641.5px;top:703.5px;" width="15" height="5" viewBox="0 0 15 5" fill="none"><g stroke="#7c8696" stroke-width="1.05"><ellipse cx="2.00" cy="2.5" rx="1.55" ry="1.85"></ellipse><ellipse cx="6.90" cy="2.5" rx="1.55" ry="1.85"></ellipse><ellipse cx="11.80" cy="2.5" rx="1.55" ry="1.85"></ellipse></g></svg>
<div style="position:absolute;left:120px;top:738px;width:1770px;height:1px;background:#e6e8ec"></div>
<div class="t" style="left:136.4px;top:765.43px;font-size:13.9px;color:#4d40a6;font-weight:400;">Promotion letter</div>
<svg style="position:absolute;left:605px;top:764px;" width="17" height="14" viewBox="0 0 17 14" fill="none"><g stroke="#7c8696" stroke-width="1.1" stroke-linejoin="round"><path d="M1.2 12 V2.2 Q1.2 0.8 2.6 0.8 H6 Q7 0.8 7.6 1.6 L8.2 2.5 H13.6 Q14.6 2.5 15 3.5 M2 12.2 L3.4 6.2 Q3.7 5.3 4.6 5.3 H15.2 Q16.2 5.3 16 6.3 L14.8 11.7 Q14.6 12.7 13.6 12.7 H2.6 Q1.2 12.7 1.2 11.4"></path></g></svg>
<div class="t" style="left:629.5px;top:766.45px;font-size:12.7px;color:#20242b;font-weight:400;">Employee Letters</div>
<svg style="position:absolute;left:915.5px;top:762px;" width="14" height="16" viewBox="0 0 14 16" fill="none"><g stroke="#7c8696" stroke-width="1.2" stroke-linejoin="round"><path d="M2.6 0.8 H8 L12.6 5.4 V14.2 Q12.6 15.2 11.6 15.2 H2.6 Q1.6 15.2 1.6 14.2 V1.8 Q1.6 0.8 2.6 0.8 Z M8 0.8 V4.4 Q8 5.4 9 5.4 H12.6"></path></g></svg>
<div class="t" style="left:938.5px;top:766.41px;font-size:12.75px;color:#20242b;font-weight:400;">Document Generation</div>
<div class="t" style="left:1220px;top:766.41px;font-size:12.75px;color:#5f6672;font-weight:400;">Not Generated</div>
<div style="position:absolute;left:1529px;top:751px;width:91px;height:40px;border:1px solid #4b3da0;border-radius:4px;box-sizing:border-box;background:#fff"></div>
<div class="t" style="left:1529px;width:91px;text-align:center;top:764.89px;font-size:13.6px;color:#4b3da0">Generate</div>
<svg style="position:absolute;left:1641.5px;top:767.5px;" width="15" height="5" viewBox="0 0 15 5" fill="none"><g stroke="#7c8696" stroke-width="1.05"><ellipse cx="2.00" cy="2.5" rx="1.55" ry="1.85"></ellipse><ellipse cx="6.90" cy="2.5" rx="1.55" ry="1.85"></ellipse><ellipse cx="11.80" cy="2.5" rx="1.55" ry="1.85"></ellipse></g></svg>
<div style="position:absolute;left:120px;top:802px;width:1770px;height:1px;background:#e6e8ec"></div>
<div class="t" style="left:136.4px;top:829.43px;font-size:13.9px;color:#4d40a6;font-weight:400;">Probation Extension letter</div>
<svg style="position:absolute;left:605px;top:828px;" width="17" height="14" viewBox="0 0 17 14" fill="none"><g stroke="#7c8696" stroke-width="1.1" stroke-linejoin="round"><path d="M1.2 12 V2.2 Q1.2 0.8 2.6 0.8 H6 Q7 0.8 7.6 1.6 L8.2 2.5 H13.6 Q14.6 2.5 15 3.5 M2 12.2 L3.4 6.2 Q3.7 5.3 4.6 5.3 H15.2 Q16.2 5.3 16 6.3 L14.8 11.7 Q14.6 12.7 13.6 12.7 H2.6 Q1.2 12.7 1.2 11.4"></path></g></svg>
<div class="t" style="left:629.5px;top:830.45px;font-size:12.7px;color:#20242b;font-weight:400;">Employee Letters</div>
<svg style="position:absolute;left:915.5px;top:826px;" width="14" height="16" viewBox="0 0 14 16" fill="none"><g stroke="#7c8696" stroke-width="1.2" stroke-linejoin="round"><path d="M2.6 0.8 H8 L12.6 5.4 V14.2 Q12.6 15.2 11.6 15.2 H2.6 Q1.6 15.2 1.6 14.2 V1.8 Q1.6 0.8 2.6 0.8 Z M8 0.8 V4.4 Q8 5.4 9 5.4 H12.6"></path></g></svg>
<div class="t" style="left:938.5px;top:830.41px;font-size:12.75px;color:#20242b;font-weight:400;">Document Generation</div>
<div class="t" style="left:1220px;top:830.41px;font-size:12.75px;color:#5f6672;font-weight:400;">Not Generated</div>
<div style="position:absolute;left:1529px;top:815px;width:91px;height:40px;border:1px solid #4b3da0;border-radius:4px;box-sizing:border-box;background:#fff"></div>
<div class="t" style="left:1529px;width:91px;text-align:center;top:828.89px;font-size:13.6px;color:#4b3da0">Generate</div>
<svg style="position:absolute;left:1641.5px;top:831.5px;" width="15" height="5" viewBox="0 0 15 5" fill="none"><g stroke="#7c8696" stroke-width="1.05"><ellipse cx="2.00" cy="2.5" rx="1.55" ry="1.85"></ellipse><ellipse cx="6.90" cy="2.5" rx="1.55" ry="1.85"></ellipse><ellipse cx="11.80" cy="2.5" rx="1.55" ry="1.85"></ellipse></g></svg>
<div style="position:absolute;left:120px;top:866px;width:1770px;height:1px;background:#e6e8ec"></div>
<div class="t" style="left:137.4px;top:893.43px;font-size:13.9px;color:#4d40a6;font-weight:400;">Transfer letter</div>
<svg style="position:absolute;left:605px;top:892px;" width="17" height="14" viewBox="0 0 17 14" fill="none"><g stroke="#7c8696" stroke-width="1.1" stroke-linejoin="round"><path d="M1.2 12 V2.2 Q1.2 0.8 2.6 0.8 H6 Q7 0.8 7.6 1.6 L8.2 2.5 H13.6 Q14.6 2.5 15 3.5 M2 12.2 L3.4 6.2 Q3.7 5.3 4.6 5.3 H15.2 Q16.2 5.3 16 6.3 L14.8 11.7 Q14.6 12.7 13.6 12.7 H2.6 Q1.2 12.7 1.2 11.4"></path></g></svg>
<div class="t" style="left:629.5px;top:894.45px;font-size:12.7px;color:#20242b;font-weight:400;">Employee Letters</div>
<svg style="position:absolute;left:915.5px;top:890px;" width="14" height="16" viewBox="0 0 14 16" fill="none"><g stroke="#7c8696" stroke-width="1.2" stroke-linejoin="round"><path d="M2.6 0.8 H8 L12.6 5.4 V14.2 Q12.6 15.2 11.6 15.2 H2.6 Q1.6 15.2 1.6 14.2 V1.8 Q1.6 0.8 2.6 0.8 Z M8 0.8 V4.4 Q8 5.4 9 5.4 H12.6"></path></g></svg>
<div class="t" style="left:938.5px;top:894.41px;font-size:12.75px;color:#20242b;font-weight:400;">Document Generation</div>
<svg style="position:absolute;left:1224px;top:891px;" width="16" height="16" viewBox="0 0 16 16" fill="none"><g stroke="#7c8696" stroke-width="1.1" stroke-linecap="round"><circle cx="8" cy="8" r="7.5"></circle><path d="M8 3.5 V8 L10.8 10.2"></path></g></svg>
<div class="t" style="left:1248.2px;top:893.23px;font-size:13.2px;color:#1f232b;font-weight:400;">27 Feb 2025</div>
<div style="position:absolute;left:1529px;top:879px;width:91px;height:40px;border:1px solid #4b3da0;border-radius:4px;box-sizing:border-box;background:#fff"></div>
<div class="t" style="left:1529px;width:91px;text-align:center;top:892.89px;font-size:13.6px;color:#4b3da0">Generate</div>
<svg style="position:absolute;left:1641.5px;top:895.5px;" width="15" height="5" viewBox="0 0 15 5" fill="none"><g stroke="#7c8696" stroke-width="1.05"><ellipse cx="2.00" cy="2.5" rx="1.55" ry="1.85"></ellipse><ellipse cx="6.90" cy="2.5" rx="1.55" ry="1.85"></ellipse><ellipse cx="11.80" cy="2.5" rx="1.55" ry="1.85"></ellipse></g></svg>
<div style="position:absolute;left:120px;top:930px;width:1770px;height:1px;background:#e6e8ec"></div>
<svg style="position:absolute;left:605px;top:956px;" width="17" height="14" viewBox="0 0 17 14" fill="none"><g stroke="#7c8696" stroke-width="1.1" stroke-linejoin="round"><path d="M1.2 12 V2.2 Q1.2 0.8 2.6 0.8 H6 Q7 0.8 7.6 1.6 L8.2 2.5 H13.6 Q14.6 2.5 15 3.5 M2 12.2 L3.4 6.2 Q3.7 5.3 4.6 5.3 H15.2 Q16.2 5.3 16 6.3 L14.8 11.7 Q14.6 12.7 13.6 12.7 H2.6 Q1.2 12.7 1.2 11.4"></path></g></svg>
<svg style="position:absolute;left:915.5px;top:954px;" width="14" height="16" viewBox="0 0 14 16" fill="none"><g stroke="#7c8696" stroke-width="1.2" stroke-linejoin="round"><path d="M2.6 0.8 H8 L12.6 5.4 V14.2 Q12.6 15.2 11.6 15.2 H2.6 Q1.6 15.2 1.6 14.2 V1.8 Q1.6 0.8 2.6 0.8 Z M8 0.8 V4.4 Q8 5.4 9 5.4 H12.6"></path></g></svg>
<div style="position:absolute;left:1529px;top:943px;width:91px;height:40px;border:1px solid #4b3da0;border-radius:4px;box-sizing:border-box;background:#fff"></div>
<div class="t" style="left:1529px;width:91px;text-align:center;top:956.89px;font-size:13.6px;color:#4b3da0">Generate</div>
<svg style="position:absolute;left:1641.5px;top:959.5px;" width="15" height="5" viewBox="0 0 15 5" fill="none"><g stroke="#7c8696" stroke-width="1.05"><ellipse cx="2.00" cy="2.5" rx="1.55" ry="1.85"></ellipse><ellipse cx="6.90" cy="2.5" rx="1.55" ry="1.85"></ellipse><ellipse cx="11.80" cy="2.5" rx="1.55" ry="1.85"></ellipse></g></svg>
<div style="position:absolute;left:1629px;top:465px;width:200px;height:162px;background:#fff;border-radius:3px;box-shadow:0 3px 7px rgba(0,0,0,.24),0 0 2px rgba(0,0,0,.14);z-index:5"></div>
<svg style="position:absolute;left:1648px;top:485px;z-index:6" width="14" height="14" viewBox="0 0 14 14" fill="none"><g stroke="#8a93a0" stroke-width="1.1" stroke-linejoin="round"><path d="M1 13 L1.6 9.8 L10.2 1.2 Q11 0.5 11.8 1.2 L12.8 2.2 Q13.5 3 12.8 3.8 L4.2 12.4 Z M8.8 2.6 L11.4 5.2"></path></g></svg>
<div class="t" style="left: 1672.5px; top: 487.29px; font-size: 12.65px; color: rgb(35, 39, 46); font-weight: 400; z-index: 6; letter-spacing: -0.006px;">Edit template</div>
<svg style="position:absolute;left:1648px;top:521px;z-index:6" width="14" height="14" viewBox="0 0 14 14" fill="none"><g stroke="#8a93a0" stroke-width="1.1" stroke-linejoin="round"><path d="M5.5 3.5 H2 Q1 3.5 1 4.5 V12.5 Q1 13.5 2 13.5 H6 Q7 13.5 7 12.5 V10.5 M5.5 1.5 Q5.5 0.7 6.3 0.7 H10 L13 3.7 V9.7 Q13 10.5 12.2 10.5 H6.3 Q5.5 10.5 5.5 9.7 Z M10 0.7 V3.7 H13"></path></g></svg>
<div class="t" style="left:1673.5px;top:523.09px;font-size:12.65px;color:#23272e;font-weight:400;z-index:6;">Clone template</div>
<svg style="position:absolute;left:1648px;top:559px;z-index:6" width="14" height="11" viewBox="0 0 14 11" fill="none"><g stroke="#8a93a0" stroke-width="1"><circle cx="5" cy="2.8" r="2"></circle><path d="M1 10.5 Q1 6.5 5 6.5 Q9 6.5 9 10.5 Z"></path><path d="M8.5 0.9 Q10.8 0.6 10.8 2.8 Q10.8 4.6 9 4.7 M10.5 6.6 Q13.5 7 13.5 10.5 H10.5"></path></g></svg>
<div class="t" style="left: 1672.5px; top: 559.22px; font-size: 12.5px; color: rgb(35, 39, 46); font-weight: 400; z-index: 6; letter-spacing: -0.012px;">Manage Permissions</div>
<div style="position:absolute;left:1629px;top:582px;width:200px;height:1px;background:#e3e5e9;z-index:6"></div>
<svg style="position:absolute;left:1649px;top:593px;z-index:6" width="12" height="15" viewBox="0 0 12 15" fill="none"><g stroke="#e8574c" stroke-width="0.95" stroke-linejoin="round"><path d="M0.8 3 H11.2 M4 3 V1 H8 V3 M2 3 L2.5 13.3 Q2.6 14.2 3.5 14.2 H8.5 Q9.4 14.2 9.5 13.3 L10 3 M4.5 5.5 V11.8 M6 5.5 V11.8 M7.5 5.5 V11.8"></path></g></svg>
<div class="t" style="left:1672.5px;top:596.09px;font-size:12.65px;color:#e5564b;font-weight:400;z-index:6;">Delete</div>
<div style="position:absolute;left:1622px;top:437px;width:223px;height:83px;border:3px solid #6148f5;border-radius:6px;box-sizing:border-box;z-index:7"></div>
<div style="position:absolute;left:1842px;top:889px;width:48px;height:48px;border-radius:8px;background:#323947;z-index:8"></div>
<svg style="position:absolute;left:1842px;top:889px;z-index:9" width="48" height="48" viewBox="0 0 48 48" fill="none"><path d="M31.9 11.7 Q32.824 14.976 36.1 15.9 Q32.824 16.824 31.9 20.1 Q30.976 16.824 27.7 15.9 Q30.976 14.976 31.9 11.7 Z M15.3 11.2 Q16.136 14.164 19.1 15 Q16.136 15.836 15.3 18.8 Q14.464 15.836 11.5 15 Q14.464 14.164 15.3 11.2 Z M15.3 24.799999999999997 Q15.762 26.438 17.400000000000002 26.9 Q15.762 27.362 15.3 29.0 Q14.838000000000001 27.362 13.200000000000001 26.9 Q14.838000000000001 26.438 15.3 24.799999999999997 Z" fill="#fff"></path><line x1="22.4" y1="21.4" x2="30.7" y2="33.4" stroke="#fff" stroke-width="3.4" stroke-linecap="round"></line><circle cx="22.6" cy="21.7" r="0.7" fill="#323947"></circle></svg>
</body></html>
